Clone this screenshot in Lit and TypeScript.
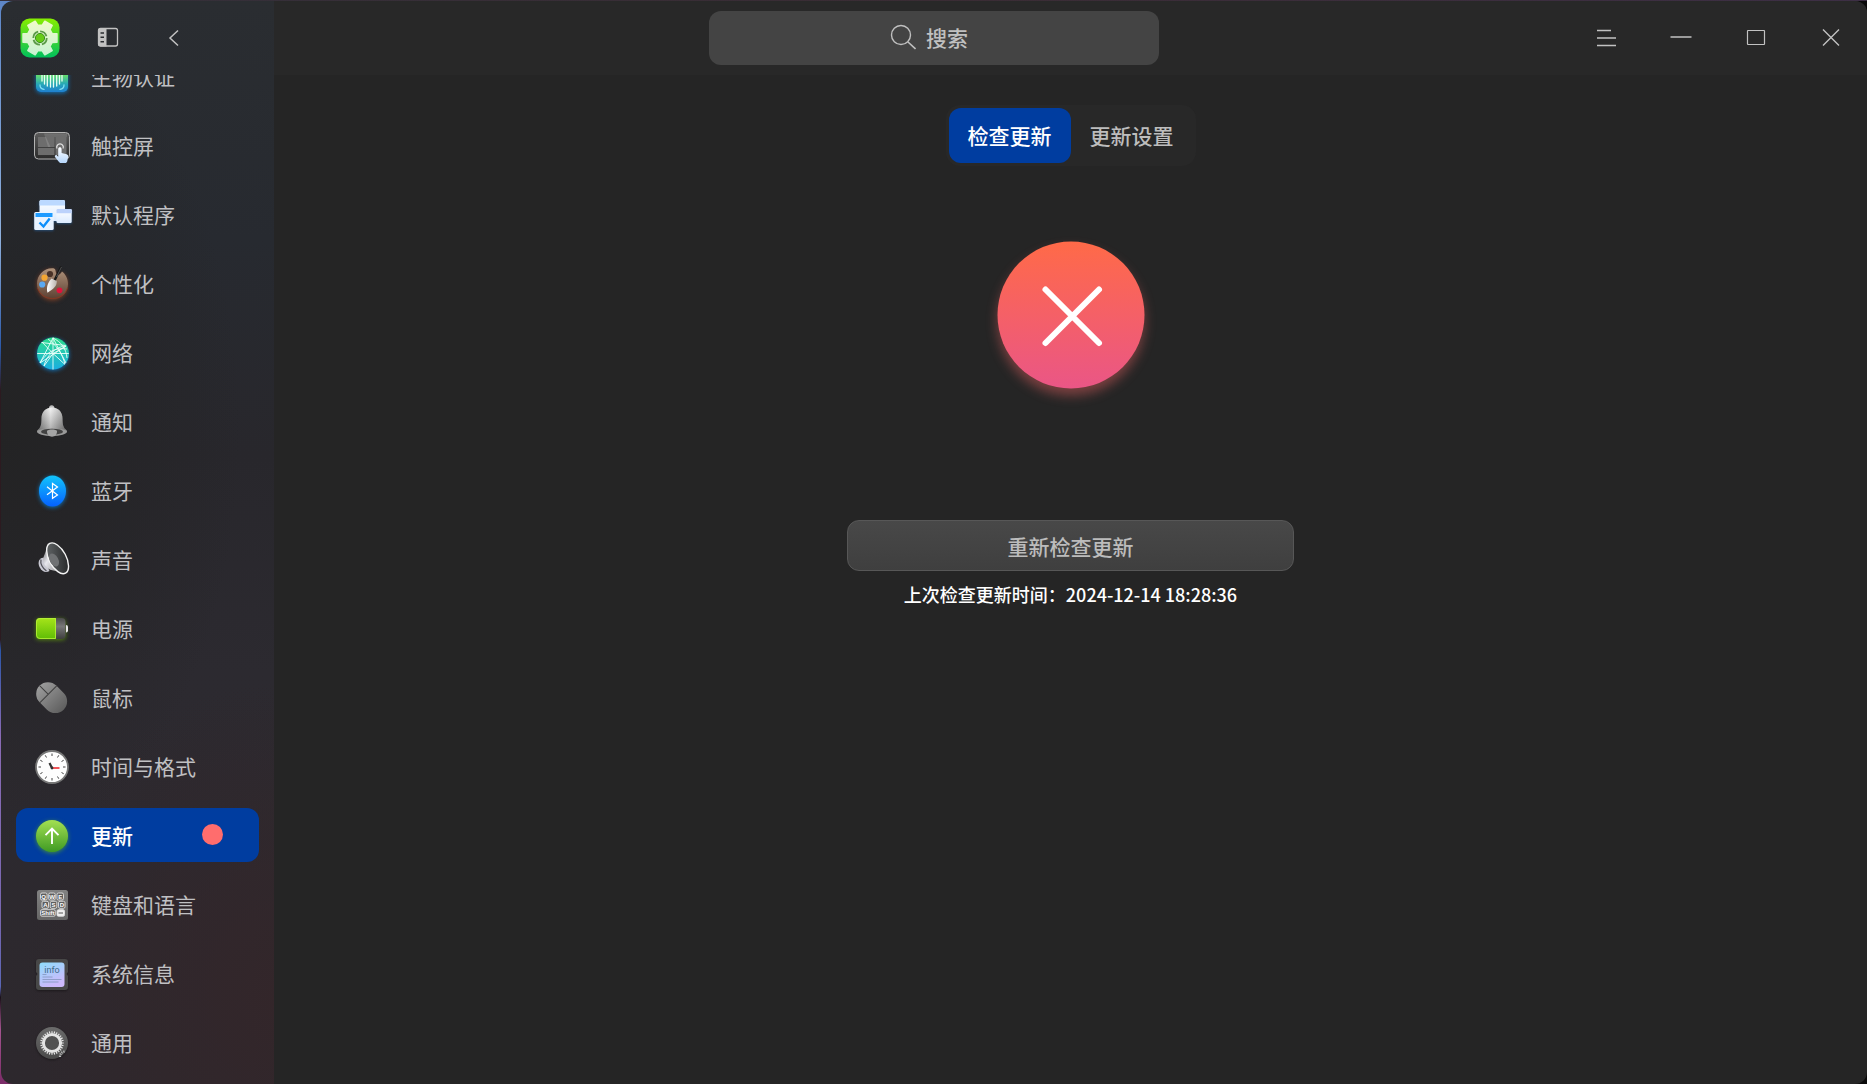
import { LitElement, html, css, svg } from "lit";
import { customElement, property, state } from "lit/decorators.js";
import { classMap } from "lit/directives/class-map.js";

const bar = (x: number, top: number, bottom: number) => svg`<path d="M${x} ${top}V${bottom}"/>`;
const polar = (cx: number, cy: number, r: number, deg: number) => {
  const a = (deg * Math.PI) / 180;
  return `${(cx + r * Math.cos(a)).toFixed(2)} ${(cy + r * Math.sin(a)).toFixed(2)}`;
};
const ticks = (n: number, cx: number, cy: number, r1: number, r2: number) =>
  Array.from({ length: n }, (_, i) => `M${polar(cx, cy, r1, (i * 360) / n)}L${polar(cx, cy, r2, (i * 360) / n)}`).join("");
const gear = (cx: number, cy: number, inner: number, outer: number) =>
  "M" +
  [0, 60, 120, 180, 240, 300]
    .map((a) => [polar(cx, cy, inner, a - 20), polar(cx, cy, outer, a - 14), polar(cx, cy, outer, a + 14), polar(cx, cy, inner, a + 20)].join("L"))
    .join("L") +
  "Z";

const icons: Record<string, unknown> = {
  biometric: svg`
    <defs><linearGradient id="g" x2="0" y2="1"><stop stop-color="#a5f04c"/><stop offset=".5" stop-color="#5fd873"/><stop offset=".75" stop-color="#27a9b8"/><stop offset="1" stop-color="#1f7fd0"/></linearGradient></defs>
    <rect class="glow-blue" x="4" y="4" width="32" height="32" rx="5" fill="url(#g)"/>
    <g fill="none" stroke="#e8fff4" stroke-width="1.300" stroke-linecap="round">
      ${bar(10, 14, 25)}${bar(12.5, 14, 28)}${bar(15.3, 14, 30)}${bar(18.5, 14, 31)}${bar(21.5, 14, 31)}${bar(24.7, 14, 30)}${bar(27.5, 14, 28)}${bar(30, 14, 25)}
      <path d="M8 29c0 3 1.500 4 4 4.300M32 29c0 3-1.500 4-4 4.300" stroke="#7fe0f2"/>
    </g>`,
  touch: svg`
    <defs>
      <linearGradient id="g" x2="0" y2="1"><stop stop-color="#5c5c5c"/><stop offset="1" stop-color="#2b2b2b"/></linearGradient>
      <linearGradient id="h" x2="0" y2="1"><stop stop-color="#fff"/><stop offset="1" stop-color="#b5d6fb"/></linearGradient>
    </defs>
    <rect x="2.500" y="7.500" width="35" height="26.500" rx="4" fill="url(#g)" stroke="#b3b3b3"/>
    <g fill="#6d6d6d"><rect x="6" y="12" width="16.500" height="10"/><rect x="6" y="23" width="16.500" height="7"/><rect x="23.500" y="12" width="11" height="18"/></g>
    <path d="M12 8.500h23V12H14l4.500 10H16z" fill="#fff" opacity=".14"/>
    <path d="M25 23.500a3.300 3.300 0 1 1 6 0" fill="none" stroke="#e6e6e6" stroke-width="1.200"/>
    <path d="M26.200 24c0-2.300 3.400-2.300 3.400 0v4l5 1.200c1.300.4 1.800 1.300 1.600 2.600l-.9 4.200c-.3 1.500-1.100 2-2.400 2h-3.700c-1.100 0-1.800-.4-2.400-1.200L23 32c-.7-1.500 1-2.500 2-1.500l1.200 1.200z" fill="url(#h)"/>`,
  defaults: svg`
    <defs><linearGradient id="g" x2="0" y2="1"><stop stop-color="#fff"/><stop offset="1" stop-color="#dcebff"/></linearGradient></defs>
    <g class="glow-soft">
      <rect x="7.500" y="6" width="25.500" height="21" rx="1.500" fill="url(#g)"/><path d="M7.500 11.500V7.500A1.500 1.500 0 0 1 9 6h22.500A1.500 1.500 0 0 1 33 7.500v4z" fill="#bcd9ff"/>
      <rect x="24.500" y="15" width="15.200" height="14" rx="1.200" fill="url(#g)"/><path d="M24.500 19.300v-3q0-1.300 1.300-1.300h12.600q1.300 0 1.300 1.300v3z" fill="#bcd2fb"/>
      <rect x="2.200" y="18" width="19.500" height="18" rx="1.500" fill="#e9f3ff"/><path d="M3.500 19h17v4h-17z" fill="#1e9bff"/>
    </g>
    <path d="m7.500 28.500 4 4 6.200-8" fill="none" stroke="#0d8ffb" stroke-width="2.400"/>`,
  personal: svg`
    <defs>
      <linearGradient id="g" x2="0" y2="1"><stop stop-color="#b0937b"/><stop offset="1" stop-color="#5a3e30"/></linearGradient>
      <linearGradient id="h"><stop stop-color="#fff"/><stop offset="1" stop-color="#b9b3ac"/></linearGradient>
    </defs>
    <path class="glow-warm" d="M21.500 5.300C12 4.500 5 12 5 20.700c0 9 7 15.800 15.500 15.800S36 29.500 36 21c0-5.500-2.500-9.700-6-12.400-1.500 2.500-3 4.200-5 2.700S24.500 6 21.500 5.300z" fill="url(#g)"/>
    <path d="M5.500 25c2.200 6.500 8 10.500 15 10.500S33.500 31.500 35.500 25" fill="none" stroke="#8c3520" stroke-width=".9"/>
    <circle cx="18" cy="11" r="3.100" fill="#4a3227"/><circle cx="12.500" cy="14.700" r="3.100" fill="#f5a632"/>
    <circle cx="10.200" cy="21.500" r="3.100" fill="#5aa9f2"/><circle cx="27.500" cy="27.300" r="2.900" fill="#e0123c"/>
    <path d="M28.800 4.500 22.500 17.500" stroke="#181818" stroke-width="2.400" stroke-linecap="round"/>
    <path d="M29.500 4 24.500 14" stroke="#777" stroke-width=".6"/>
    <path d="M19.500 15.500 24.800 18c.3 5-3.300 8-9.300 11.700-1.500-5 .5-10.500 4-14.200z" fill="url(#h)"/>`,
  network: svg`
    <defs><linearGradient id="g" x2="0" y2="1"><stop stop-color="#2bdc8c"/><stop offset="1" stop-color="#1aaee0"/></linearGradient></defs>
    <circle class="glow-blue" cx="21" cy="21.500" r="16" fill="url(#g)"/>
    <g fill="none" stroke="#e9fff9" stroke-width=".9">
      <path d="M21 5.500v32M5.200 21.500h31.600M21 6 8 31M21 6l13 25M21 21.500 10 10M21 21.500l13-7.500M21 21.500 12 34M21 21.500l12 11M9.500 10.500l24 3M8 31c6-10 14-16 27-14M21 6c8 4 13 10 14 20M12 34c2-10 12-20 22-20M16 7c8 6 14 14 17 25M8 31l26-17"/>
    </g>`,
  notify: svg`
    <defs>
      <linearGradient id="g" x2="0" y2="1"><stop stop-color="#efefef"/><stop offset="1" stop-color="#8d8d8d"/></linearGradient>
      <linearGradient id="h"><stop stop-color="#000" stop-opacity=".25"/><stop offset=".45" stop-color="#fff" stop-opacity=".3"/><stop offset="1" stop-color="#000" stop-opacity=".3"/></linearGradient>
    </defs>
    <circle cx="19.700" cy="6.800" r="2.600" fill="#bdbdbd"/>
    <ellipse cx="20" cy="30.500" rx="15" ry="4.600" fill="#999"/>
    <path d="M20 6.500c-7 0-10.500 5-10.500 11 0 6-.8 9-4 12 3-2.500 26-2.500 29 0-3.200-3-4-6-4-12 0-6-3.500-11-10.500-11z" fill="url(#g)"/>
    <path d="M20 6.500c-7 0-10.500 5-10.500 11 0 6-.8 9-4 12 3-2.500 26-2.500 29 0-3.200-3-4-6-4-12 0-6-3.500-11-10.500-11z" fill="url(#h)"/>
    <ellipse cx="20" cy="30.700" rx="11" ry="3" fill="#424242"/>
    <path d="M15 30c1-2 9-2 10 0 0 4-2 5.700-5 5.700s-5-1.700-5-5.700z" fill="#a5a5a5"/>`,
  bluetooth: svg`
    <defs><linearGradient id="g" x2="0" y2="1"><stop stop-color="#12c4fb"/><stop offset="1" stop-color="#0561ff"/></linearGradient></defs>
    <ellipse class="glow-blue" cx="20.500" cy="21" rx="13.500" ry="15.500" fill="url(#g)"/>
    <path d="m15 16.700 10.500 8.300-5 3.300V13.500l5 3.500L15 24.800" fill="none" stroke="#fff" stroke-width="1.200"/>`,
  sound: svg`
    <defs>
      <linearGradient id="g" x2="1" y2="1"><stop stop-color="#555"/><stop offset=".4" stop-color="#e6e6ec"/><stop offset="1" stop-color="#777"/></linearGradient>
      <linearGradient id="h" x2="1" y2="1"><stop stop-color="#6a6e70"/><stop offset="1" stop-color="#1e1f20"/></linearGradient>
    </defs>
    <path d="M12 19c-4-1-7 4-4.500 9s6.500 6 10 4z" fill="#c9c9d3"/>
    <path d="M9 20.500c-1 4 1.500 9 5.500 11.500" stroke="#55555c" stroke-width="1.300" fill="none"/>
    <path d="M16 4C14 11 13 15 11.200 19c-.5 5 2.500 9.500 7 11.800 4 .7 8.800 2.200 13.800 3.700z" fill="url(#g)"/>
    <ellipse cx="25.600" cy="19.300" rx="8.600" ry="16.800" transform="rotate(-28 25.600 19.300)" fill="url(#h)" stroke="#f4f4f4" stroke-width="1.400"/>
    <ellipse cx="22" cy="21" rx="4.300" ry="7" transform="rotate(-28 22 21)" fill="#707274"/>`,
  power: svg`
    <defs>
      <linearGradient id="g" x2="0" y2="1"><stop stop-color="#a6e41a"/><stop offset="1" stop-color="#5fbd05"/></linearGradient>
      <linearGradient id="h" x2="0" y2="1"><stop stop-color="#4c4c4c"/><stop offset=".4" stop-color="#787878"/><stop offset="1" stop-color="#3e3e3e"/></linearGradient>
    </defs>
    <g class="glow-green"><rect x="4" y="10" width="29.500" height="21" rx="4" fill="url(#h)"/>
    <path d="M8 10h16v21H8q-4 0-4-4V14q0-4 4-4z" fill="url(#g)"/></g>
    <path d="M8 10.500h15.500v20H8q-3.500 0-3.500-3.500V14q0-3.500 3.500-3.500z" fill="none" stroke="#b8f23a" stroke-width=".8"/>
    <path d="M34 17q2 0 2 2v3.500q0 2-2 2z" fill="#e8e8e8"/>`,
  mouse: svg`
    <defs><linearGradient id="g" x2="0" y2="1"><stop stop-color="#9b9b9b"/><stop offset="1" stop-color="#5f5f5f"/></linearGradient></defs>
    <g transform="rotate(-45 19.500 20.500)">
      <rect x="7.700" y="3.700" width="23.600" height="34" rx="11.800" fill="url(#g)"/>
      <path d="M7.700 16h23.600M19.500 4v12" stroke="#3f3f3f" stroke-width="1" fill="none"/>
    </g>`,
  time: svg`
    <circle cx="20" cy="21" r="16" fill="#fdfdfd" stroke="#777" stroke-width="1.800"/>
    <path d="${ticks(12, 20, 21, 11, 13.5)}" stroke="#444" stroke-width="1"/>
    <path d="M20 22h7.500" stroke="#f2555a" stroke-width="2"/>
    <path d="m20 22-2.500-5" stroke="#333" stroke-width="2.200"/><circle cx="20" cy="22" r="1.400" fill="#333"/>`,
  update: svg`
    <defs><linearGradient id="g" x2="0" y2="1"><stop stop-color="#a3e052"/><stop offset="1" stop-color="#3f9a24"/></linearGradient></defs>
    <circle class="glow-green" cx="20" cy="21" r="16" fill="url(#g)"/>
    <path d="M20 29V14m-6.500 6.200L20 13.700l6.500 6.500" fill="none" stroke="#fff" stroke-width="1.900"/>`,
  keyboard: svg`
    <defs><linearGradient id="g" x2="0" y2="1"><stop stop-color="#828282"/><stop offset="1" stop-color="#666"/></linearGradient></defs>
    <rect x="5" y="6" width="31" height="30" rx="2.500" fill="url(#g)"/>
    <g fill="#5e5e5e" stroke="#e2e2e2" stroke-width=".9"><rect x="8.500" y="9" width="6.500" height="7" rx="1.500"/><rect x="16.700" y="9" width="6.500" height="7" rx="1.500"/><rect x="25" y="9" width="6.500" height="7" rx="1.500"/>
    <rect x="10" y="17.300" width="6.500" height="7" rx="1.500"/><rect x="18.300" y="17.300" width="6.500" height="7" rx="1.500"/><rect x="26.500" y="17.300" width="6.500" height="7" rx="1.500"/>
    <rect x="8.500" y="25.700" width="14.800" height="6.500" rx="1.500"/><rect x="25" y="25.700" width="7.500" height="6.500" rx="1.500" fill="#f0f0f0"/></g>
    <g class="keycap"><text x="11.700" y="15">Q</text><text x="20" y="15">W</text><text x="28.300" y="15">E</text>
    <text x="13.300" y="23.300">A</text><text x="21.500" y="23.300">S</text><text x="29.800" y="23.300">D</text><text x="15.900" y="31.300">Shift</text></g>
    <path d="M26.500 29h4.500" stroke="#555" stroke-width="1"/>`,
  info: svg`
    <defs><linearGradient id="g" x2=".4" y2="1"><stop stop-color="#8fdcfb"/><stop offset="1" stop-color="#cdb9fb"/></linearGradient></defs>
    <path class="shade" d="M7 6h26q3 0 3 3v10l-1.500 2 1.500 2v11q0 3-3 3H7q-3 0-3-3V23l1.500-2L4 19V9q0-3 3-3z" fill="#484848"/>
    <rect x="7.500" y="9.500" width="25" height="24.500" rx="3" fill="url(#g)"/>
    <text class="infotext" x="20" y="19.500">info</text>
    <path d="M10.500 21.500h4M10.500 24h10M10.500 26.500h19M10.500 29h16" stroke="#8494bd" stroke-width=".8"/>`,
  general: svg`
    <defs><linearGradient id="g" x2="0" y2="1"><stop stop-color="#6b6b6b"/><stop offset="1" stop-color="#4a4a4a"/></linearGradient></defs>
    <circle class="shade" cx="20" cy="21" r="16" fill="url(#g)"/>
    <circle cx="20" cy="21" r="8.600" fill="#515151" stroke="#e4e4e4" stroke-width="3"/>
    <path d="${ticks(28, 20, 21, 10, 11.8)}" stroke="#e4e4e4" stroke-width="1.200"/>
    <path d="M28 35c0-3.500 2-5.500 5.500-5.500" fill="none" stroke="#bdbdbd" stroke-width="2.200" stroke-dasharray="1.200 1"/>`,
};

@customElement("nav-item")
class NavItem extends LitElement {
  @property() icon = "";
  @property() label = "";
  @property({ type: Boolean }) current = false;
  @property({ type: Boolean }) badge = false;

  static styles = css`
    :host { display: block; flex: none; }
    .row {
      display: flex;
      align-items: center;
      gap: 19px;
      height: 54px;
      padding: 0 16px;
      border-radius: 12px;
      color: #c0c0c3;
      font-size: 21px;
      line-height: 30px;
      text-decoration: none;
    }
    .row.current { background: #003da0; color: #fff; font-weight: 500; }
    .icon { width: 40px; height: 40px; flex: none; overflow: visible; }
    .label { flex: 1; white-space: nowrap; }
    .badge { width: 21px; height: 21px; margin: 0 20px 2px 0; border-radius: 50%; background: #ff6d6d; }
    .keycap { font: bold 6px "Liberation Sans", sans-serif; fill: #fff; text-anchor: middle; }
    .infotext { font: 9px Roboto, sans-serif; fill: #3f6a88; text-anchor: middle; }
    .glow-blue { filter: drop-shadow(0 1px 2px #0a86dccc); }
    .glow-soft { filter: drop-shadow(0 1px 1px #2b83dd66); }
    .glow-warm { filter: drop-shadow(0 1px 2px #c0522488); }
    .glow-green { filter: drop-shadow(0 1px 2px #6fbf0099); }
    .shade { filter: drop-shadow(0 1px 1px #00000066); }
  `;

  render() {
    return html`<a class=${classMap({ row: true, current: this.current })} href="#${this.icon}" aria-current=${this.current ? "page" : "false"}>
      <svg class="icon" viewBox="0 0 40 40" aria-hidden="true">${icons[this.icon]}</svg>
      <span class="label">${this.label}</span>
      ${this.badge ? html`<span class="badge"></span>` : null}
    </a>`;
  }
}

const sections = [
  ["biometric", "生物认证"],
  ["touch", "触控屏"],
  ["defaults", "默认程序"],
  ["personal", "个性化"],
  ["network", "网络"],
  ["notify", "通知"],
  ["bluetooth", "蓝牙"],
  ["sound", "声音"],
  ["power", "电源"],
  ["mouse", "鼠标"],
  ["time", "时间与格式"],
  ["update", "更新"],
  ["keyboard", "键盘和语言"],
  ["info", "系统信息"],
  ["general", "通用"],
];

@customElement("app-root")
class AppRoot extends LitElement {
  @state() private tab = 0;

  static styles = css`
    :host {
      display: block;
      box-sizing: border-box;
      height: 100vh;
      padding: 1px 0 0 1px;
      font-family: "Noto Sans CJK SC", sans-serif;
      background:
        linear-gradient(90deg, #34303a, #3a2c34 50%, #3d2f45) top / 100% 1px no-repeat,
        linear-gradient(#5d86c8, #8fb0dc 22%, #2c59a8 32%, #2c1a20 36%, #2c1a20 59%, #2c56a8 60%, #8a6bb4 68%, #7767b0 85%, #5a66b4 91%, #1a1018 92%, #a3548f 95%, #7b2c68) left / 16px 100% no-repeat,
        #0a0a0a;
    }
    .window {
      --side: 273px;
      display: flex;
      flex-direction: column;
      height: 100%;
      overflow: hidden;
      border-radius: 12px;
      background:
        linear-gradient(90deg, transparent var(--side), #252525 var(--side)),
        radial-gradient(240px 420px at 0 430px, #232324, #23232400),
        radial-gradient(260px 320px at 280px 1000px, #33262a, #33262a00),
        linear-gradient(#2a2d31, #272a30 22%, #28272c 42%, #2c2a30 62%, #2d282d);
    }
    .header {
      display: grid;
      grid-template-columns: 1fr 450px 1fr;
      align-items: center;
      flex: none;
      height: 74px;
      background: linear-gradient(90deg, transparent var(--side), #282828 var(--side));
    }
    .left, .right { display: flex; align-items: center; }
    .left { padding-left: 19px; }
    .right { justify-content: flex-end; gap: 21px; padding: 0 9px 2px 0; }
    .logo { width: 40px; height: 40px; margin-right: 21px; }
    .tool {
      display: grid;
      place-items: center;
      width: 54px;
      height: 54px;
      padding: 0;
      border: 0;
      border-radius: 12px;
      background: none;
      color: #c2c2c2;
    }
    .left .tool { margin-right: 12px; }
    .glyph { width: 24px; height: 24px; fill: none; stroke: currentColor; }
    .search {
      display: flex;
      align-items: center;
      justify-content: center;
      gap: 10px;
      box-sizing: border-box;
      height: 54px;
      padding: 0 8px 2px 0;
      border-radius: 12px;
      background: #444;
      color: #c0c0c0;
    }
    .search .glyph { width: 26px; height: 26px; }
    .field {
      width: 44px;
      padding: 0;
      border: 0;
      outline: 0;
      background: none;
      color: inherit;
      font: 500 21px/30px "Noto Sans CJK SC", sans-serif;
    }
    .field::placeholder { color: inherit; opacity: 1; }
    .body { display: flex; flex: 1; min-height: 0; }
    .sidebar {
      display: flex;
      flex-direction: column;
      justify-content: flex-end;
      gap: 15px;
      box-sizing: border-box;
      width: var(--side);
      padding: 0 15px 15px;
      overflow: hidden;
    }
    .main { display: flex; flex: 1; flex-direction: column; align-items: center; padding-top: 30px; }
    .tabs { display: flex; padding: 3px; border-radius: 14px; background: #282828; }
    .tab {
      height: 55px;
      padding: 0 19px 2px;
      border: 0;
      border-radius: 12px;
      background: none;
      color: #bdbdbd;
      font: 500 21px/30px "Noto Sans CJK SC", sans-serif;
    }
    .tab.on { background: #003da0; color: #fff; }
    .status { width: 148px; height: 148px; margin-top: 75px; overflow: visible; }
    .disc { filter: drop-shadow(0 7px 6px #ff6a6a66); }
    .retry {
      box-sizing: border-box;
      width: 447px;
      max-width: 100%;
      height: 51px;
      margin-top: 131px;
      padding: 0;
      border: 1px solid #575757;
      border-radius: 12px;
      background: linear-gradient(#484848, #3f3f3f);
      color: #bcbcbc;
      font: 500 21px/30px "Noto Sans CJK SC", sans-serif;
    }
    .last { margin: 10px 0 0; color: #fff; font-size: 18px; font-weight: 500; line-height: 26px; }
  `;

  render() {
    return html`
      <div class="window">
        <header class="header">
          <div class="left">
            <svg class="logo" viewBox="0 0 40 40" aria-hidden="true">
              <defs>
                <linearGradient id="bg" x2="0" y2="1"><stop stop-color="#86ee00"/><stop offset="1" stop-color="#00c05c"/></linearGradient>
                <linearGradient id="cog" x2="0" y2="1"><stop stop-color="#eefbc9"/><stop offset="1" stop-color="#c9f2d3"/></linearGradient>
              </defs>
              <rect x=".5" y=".5" width="39" height="39" rx="9" fill="url(#bg)"/>
              <path d=${gear(20, 20, 13, 17.5)} fill="url(#cog)" stroke="url(#cog)" stroke-width="1.500" stroke-linejoin="round"/>
              <circle cx="20" cy="20" r="6.700" fill="none" stroke="#5c9a4a" stroke-width="1.800" stroke-dasharray="8.500 2"/>
              <circle cx="20" cy="20" r="4.600" fill="#66cc18" stroke="#3d8f1f" stroke-width="1"/>
            </svg>
            <button class="tool" aria-label="侧边栏">
              <svg class="glyph" viewBox="0 0 24 24"><rect x="2.500" y="2.500" width="19" height="17.500" rx="2" stroke-width="1.300"/><path d="M4 2h6.500v18.500H4q-2 0-2-2V4q0-2 2-2z" fill="currentColor" stroke="none"/><path d="M4.500 7h3.500M4.500 11.300h3.500M4.500 15.700h3.500" stroke="#2a2d31" stroke-width="1.400"/></svg>
            </button>
            <button class="tool" aria-label="返回">
              <svg class="glyph" viewBox="0 0 24 24"><path d="m16 4.500-8 7.500 8 7.500" stroke-width="1.500"/></svg>
            </button>
          </div>
          <label class="search">
            <svg class="glyph" viewBox="0 0 26 26" aria-hidden="true"><circle cx="11" cy="11" r="9.500" stroke-width="1.400"/><path d="m18 18 7.500 7" stroke-width="1.600"/></svg>
            <input class="field" type="text" placeholder="搜索" aria-label="搜索" />
          </label>
          <div class="right">
            <button class="tool" aria-label="菜单">
              <svg class="glyph" viewBox="0 0 24 24"><path d="M3 5.500h14M3 13h19M3 20.500h19" stroke-width="1.400"/></svg>
            </button>
            <button class="tool" aria-label="最小化">
              <svg class="glyph" viewBox="0 0 24 24"><path d="M1.500 12h21" stroke-width="1.600"/></svg>
            </button>
            <button class="tool" aria-label="最大化">
              <svg class="glyph" viewBox="0 0 24 24"><rect x="3.500" y="5.500" width="17" height="14" rx=".5" stroke-width="1.200"/></svg>
            </button>
            <button class="tool" aria-label="关闭">
              <svg class="glyph" viewBox="0 0 24 24"><path d="m4 4.500 16 16M20 4.500l-16 16" stroke-width="1.400"/></svg>
            </button>
          </div>
        </header>
        <div class="body">
          <nav class="sidebar">
            ${sections.map(
              ([icon, label]) => html`<nav-item icon=${icon} label=${label} ?current=${icon === "update"} ?badge=${icon === "update"}></nav-item>`,
            )}
          </nav>
          <main class="main">
            <div class="tabs" role="tablist">
              ${["检查更新", "更新设置"].map(
                (name, i) => html`<button
                  class=${classMap({ tab: true, on: this.tab === i })}
                  role="tab"
                  aria-selected=${this.tab === i ? "true" : "false"}
                  @click=${() => (this.tab = i)}
                >${name}</button>`,
              )}
            </div>
            <svg class="status" viewBox="0 0 148 148" aria-hidden="true">
              <defs><linearGradient id="err" x2="0" y2="1"><stop stop-color="#ff6a48"/><stop offset="1" stop-color="#ea5686"/></linearGradient></defs>
              <circle class="disc" cx="74" cy="74" r="73.500" fill="url(#err)"/>
              <path d="m48.500 48.500 53.500 53.500M102 48.500 48.500 102" stroke="#fff" stroke-width="6" stroke-linecap="round"/>
            </svg>
            <button class="retry">重新检查更新</button>
            <p class="last">上次检查更新时间：2024-12-14 18:28:36</p>
          </main>
        </div>
      </div>
    `;
  }
}
